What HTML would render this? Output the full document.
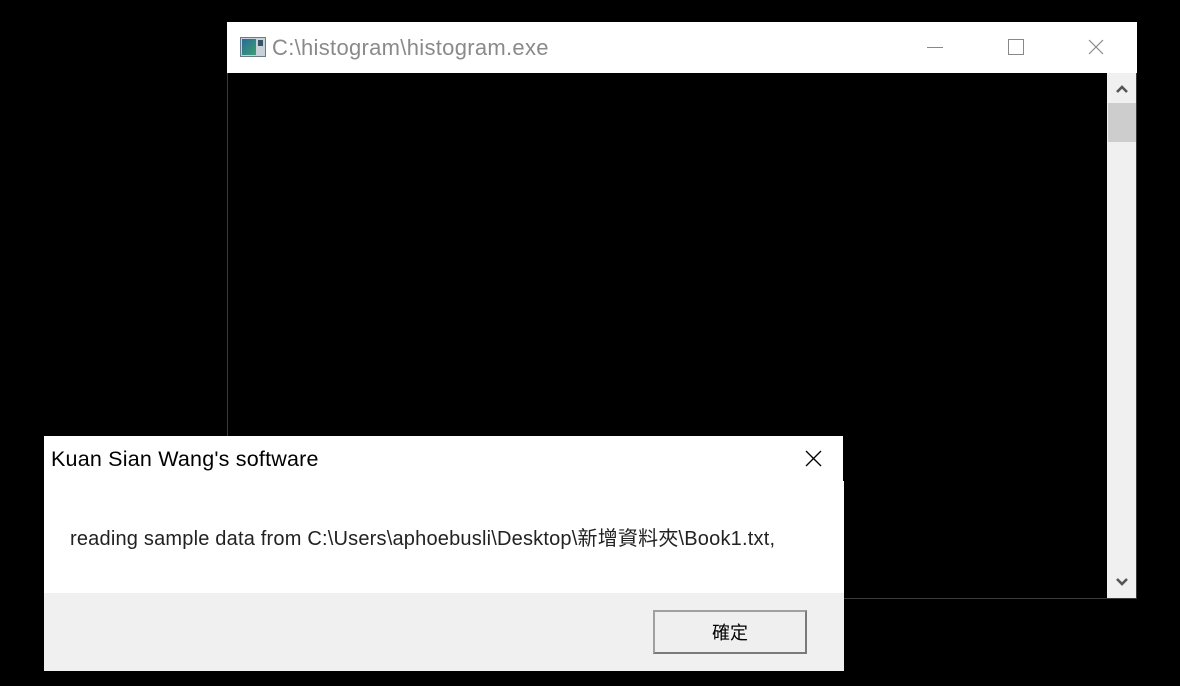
<!DOCTYPE html>
<html><head><meta charset="utf-8"><style>
body{margin:0;width:1180px;height:686px;background:#000;position:relative;overflow:hidden;font-family:"Liberation Sans","Noto Sans CJK TC",sans-serif}
.a{position:absolute}
</style></head><body>
<div class="a" style="left:227px;top:22px;width:910px;height:577px;background:#000;border:1px solid #3a3a3a;box-sizing:border-box"></div>
<div class="a" style="left:227px;top:22px;width:910px;height:51px;background:#fff"></div>
<div class="a" style="left:240px;top:37px;width:26px;height:20px;background:#c8d0d8;border:1px solid #6a7a8a;box-sizing:border-box">
 <div class="a" style="left:1px;top:1px;width:14px;height:16px;background:linear-gradient(135deg,#2a6a9a,#3aa070)"></div>
 <div class="a" style="left:17px;top:2px;width:5px;height:6px;background:#356"></div>
</div>
<div class="a" style="left:272px;top:35px;font-size:22px;letter-spacing:0.3px;color:#8a8a8a">C:\histogram\histogram.exe</div>
<div class="a" style="left:927px;top:47px;width:16px;height:1px;background:#888"></div>
<div class="a" style="left:1008px;top:39px;width:14px;height:14px;border:1px solid #888"></div>
<svg class="a" style="left:1088px;top:39px" width="16" height="16"><path d="M1 1L15 15M15 1L1 15" stroke="#888" stroke-width="1.2"/></svg>
<div class="a" style="left:1107px;top:73px;width:29px;height:525px;background:#f0f0f0"></div>
<div class="a" style="left:1108px;top:103px;width:28px;height:39px;background:#cdcdcd"></div>
<svg class="a" style="left:1115px;top:84px" width="14" height="10"><path d="M2 8L7 3L12 8" stroke="#555" stroke-width="2.6" fill="none"/></svg>
<svg class="a" style="left:1115px;top:577px" width="14" height="10"><path d="M2 2L7 7L12 2" stroke="#555" stroke-width="2.6" fill="none"/></svg>

<div class="a" style="left:44px;top:436px;width:799px;height:46px;background:#fff"></div>
<div class="a" style="left:44px;top:481px;width:800px;height:112px;background:#fff"></div>
<div class="a" style="left:44px;top:593px;width:800px;height:78px;background:#f0f0f0"></div>
<div class="a" style="left:51px;top:447px;font-size:21.5px;letter-spacing:0.2px;color:#000">Kuan Sian Wang's software</div>
<svg class="a" style="left:805px;top:450px" width="17" height="17"><path d="M1 1L16 16M16 1L1 16" stroke="#000" stroke-width="1.3"/></svg>
<div class="a" style="left:70px;top:522px;font-size:20px;letter-spacing:0.2px;color:#222;white-space:nowrap">reading sample data from C:\Users\aphoebusli\Desktop\新增資料夾\Book1.txt,</div>
<div class="a" style="left:653px;top:610px;width:154px;height:44px;background:#efefef;border:2px solid #7a7a7a;border-top-color:#a0a0a0;border-left-color:#a0a0a0;box-sizing:border-box;text-align:center;line-height:42px;font-size:18px;color:#000">確定</div>
</body></html>
